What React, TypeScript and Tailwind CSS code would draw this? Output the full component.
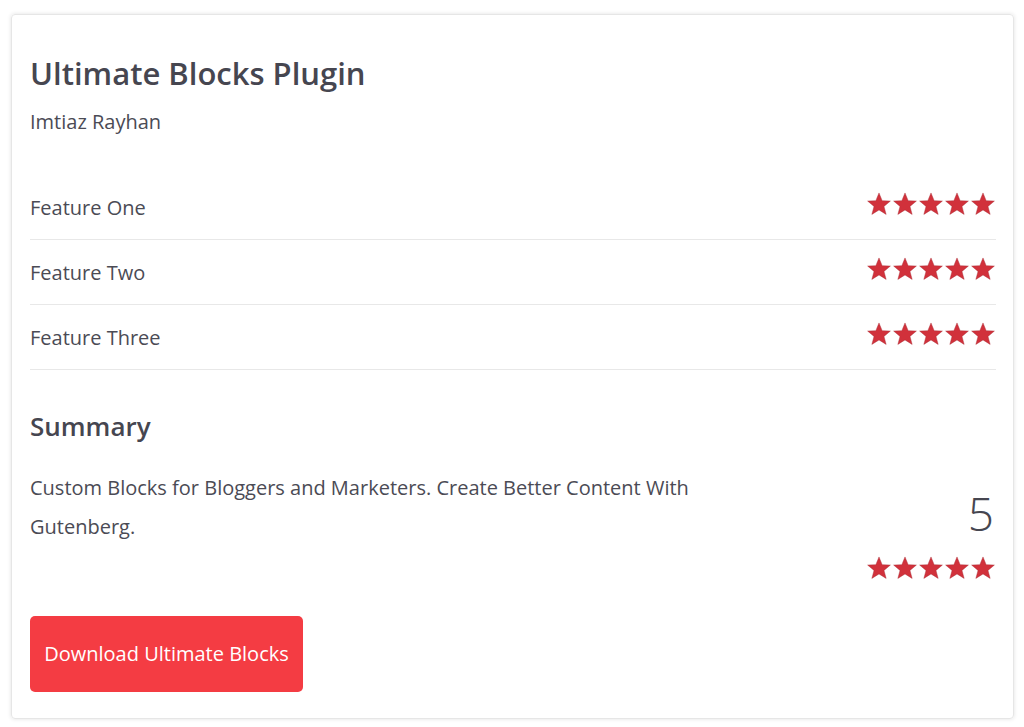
const FEATURES = ["Feature One", "Feature Two", "Feature Three"];

const Stars = () => (
  <div className="flex items-center">
    {[0, 1, 2, 3, 4].map((i) => (
      <svg key={i} width="26" height="26" viewBox="0 0 24 24">
        <path
          d="M12 1.8l2.9 7.1 7.6.4-5.9 4.9 2 7.4L12 17.5l-6.6 4.1 2-7.4L1.5 9.3l7.6-.4z"
          fill="#d1313b"
          stroke="#a82a33"
          strokeWidth="0.4"
        />
      </svg>
    ))}
  </div>
);

export default function App() {
  return (
    <div className="w-[1024px] h-[727px] bg-white pl-[11px] pr-[10px] pt-[14px] font-['Open_Sans','Noto_Sans',sans-serif] text-[#4b4b55]">
      <div className="h-[705px] rounded-[4px] border border-[#e6e6e6] shadow-[0_0_4px_rgba(0,0,0,0.12)] pl-[18px] pr-[17px] pt-[40px]">
        <h1 className="text-[31px] font-semibold leading-[36px] text-[#464650]">Ultimate Blocks Plugin</h1>
        <p className="mt-[19px] text-[20px] leading-[24px]">Imtiaz Rayhan</p>

        <div className="mt-[41px]">
          {FEATURES.map((f) => (
            <div key={f} className="flex items-center justify-between h-[65px] border-b border-[#e8e8e8]">
              <span className="text-[20px] pt-[2px]">{f}</span>
              <div className="pb-[6px]">
                <Stars />
              </div>
            </div>
          ))}
        </div>

        <h2 className="mt-[39px] text-[26px] font-semibold leading-[34px] text-[#464650]">Summary</h2>

        <div className="mt-[25px] flex justify-between">
          <p className="w-[690px] text-[20px] leading-[39px]">
            Custom Blocks for Bloggers and Marketers. Create Better Content With Gutenberg.
          </p>
          <div className="flex flex-col items-end pt-[20px]">
            <span className="text-[46px] font-light leading-[50px] text-[#464650] pr-[2px]">5</span>
            <div className="mt-[17px]">
              <Stars />
            </div>
          </div>
        </div>

        <button className="mt-[35px] h-[76px] w-[273px] rounded-[5px] bg-[#f43c43] text-white text-[20px]">
          Download Ultimate Blocks
        </button>
      </div>
    </div>
  );
}
